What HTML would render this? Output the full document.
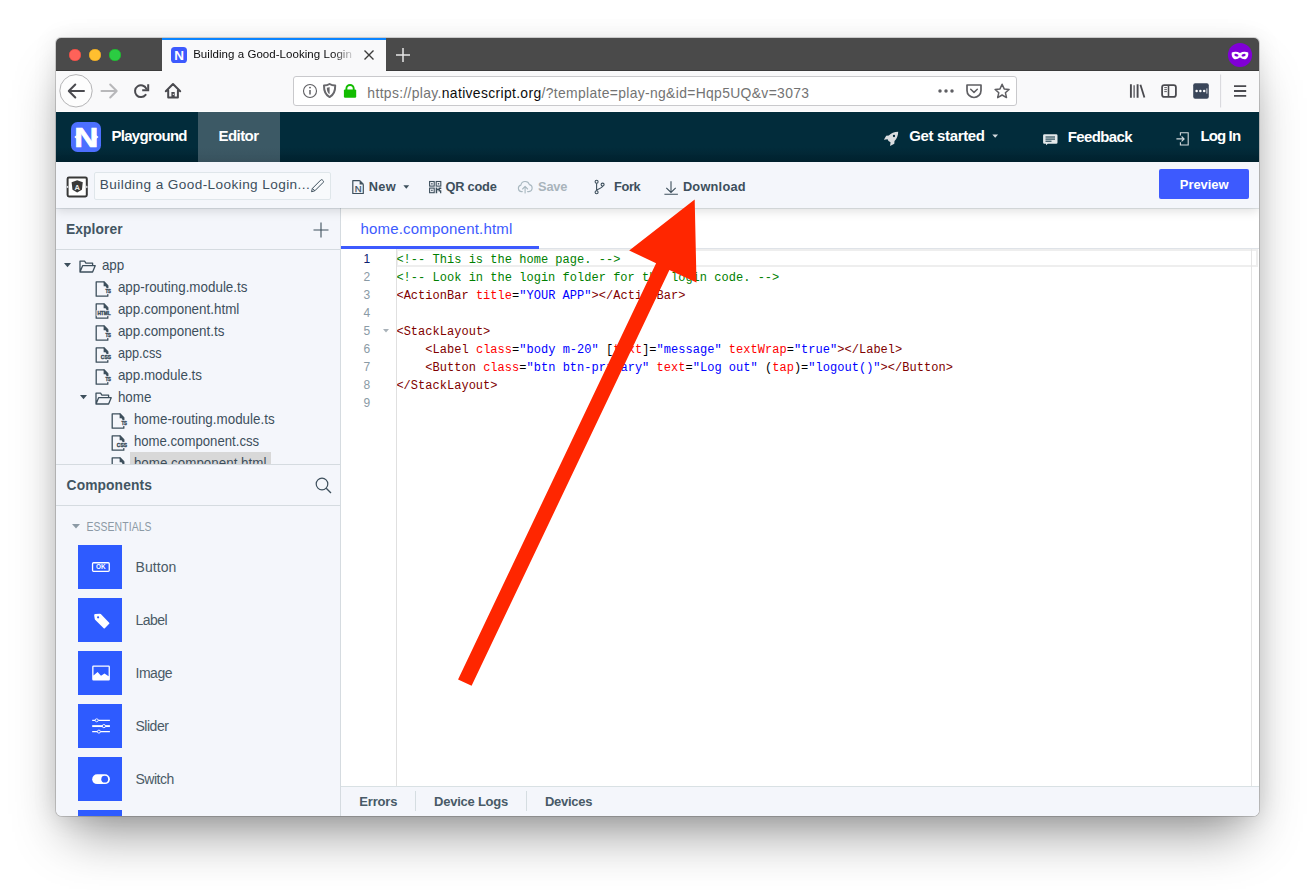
<!DOCTYPE html>
<html lang="en">
<head>
<meta charset="utf-8">
<title>Building a Good-Looking Login</title>
<style>
*{box-sizing:border-box;margin:0;padding:0}
html,body{width:1315px;height:890px;overflow:hidden;background:#fff}
body{font-family:"Liberation Sans",sans-serif;position:relative;color:#3d4f5c}
.abs{position:absolute}
#win{position:absolute;left:56px;top:38px;width:1203px;height:778px;border-radius:5px 5px 6px 6px;background:#f4f6fb;
 box-shadow:0 0 0 1px rgba(0,0,0,.16),0 29px 50px -13px rgba(0,0,0,.42),0 2px 24px rgba(0,0,0,.10);overflow:hidden}
#win > *{position:absolute}
/* ---------- browser chrome ---------- */
#tabbar{left:0;top:0;width:1203px;height:33px;background:#4a4a4a;box-shadow:inset 0 -1px 0 #3b3b3b}
#tab{position:absolute;left:106px;top:0;width:224px;height:33px;background:#f9f9fa;border-top:2px solid #0a84ff}
#tab .t{position:absolute;left:31px;top:7px;font-size:11.5px;color:#0c0c0d;white-space:nowrap;width:166px;overflow:hidden;letter-spacing:.05px;-webkit-mask-image:linear-gradient(to right,#000 0,#000 140px,transparent 163px);mask-image:linear-gradient(to right,#000 0,#000 140px,transparent 163px)}
.dot{position:absolute;top:11px;width:12px;height:12px;border-radius:50%}
#navbar{left:0;top:33px;width:1203px;height:41px;background:#f9f9fa;border-bottom:1px solid #fdfdfd}
#url{position:absolute;left:237px;top:5px;width:724px;height:30px;border:1px solid #c9c9cc;border-radius:3px;background:#fff}
#url .u{position:absolute;left:73px;top:6px;font-size:13.9px;color:#737373;white-space:nowrap;letter-spacing:.1px}
#url .u b{font-weight:normal;color:#0c0c0d}
/* ---------- app header ---------- */
#hdr{left:0;top:74px;width:1203px;height:50px;background:linear-gradient(#022c3b 0,#022c3b 70%,#01222f 100%)}
#hdr .h{position:absolute;top:16px;font-size:15px;font-weight:bold;color:#fff;white-space:nowrap;letter-spacing:-.7px}
#edtab{position:absolute;left:142px;top:0;width:82px;height:50px;background:linear-gradient(#3c5965 0,#3c5965 70%,#39535f 100%)}
/* ---------- toolbar ---------- */
#tool{left:0;top:124px;width:1203px;height:46px;background:#f4f6fb;box-shadow:0 1px 0 rgba(0,40,60,.10),0 3px 10px rgba(0,0,0,.13);z-index:3}
#tool .b{position:absolute;top:16px;font-size:12.8px;font-weight:bold;color:#3d4f5c;white-space:nowrap;letter-spacing:-.75px}
#proj{position:absolute;left:38px;top:10px;width:237px;height:28px;border:1px solid #dfe6ea;background:#f8fafc;border-radius:2px}
#proj span{position:absolute;left:5px;top:4px;font-size:13.6px;color:#3d4f5c;white-space:nowrap;letter-spacing:-.95px}
#t-prev{display:inline-block;line-height:16px}
#prev{position:absolute;left:1103px;top:7px;width:90px;height:30px;background:#3d5afe;border-radius:2px;color:#fff;font-weight:bold;font-size:13px;text-align:center;line-height:30px;letter-spacing:-.7px}
/* ---------- left panel ---------- */
#left{left:0;top:170px;width:285px;height:608px;background:#f4f6fb;border-right:1px solid #d5dbe0}
.ph{position:absolute;left:0;width:284px;height:42px;border-bottom:1px solid #d5dbe0}
.ph span{position:absolute;left:10px;top:11px;font-size:13.8px;font-weight:bold;color:#425562;letter-spacing:-.8px}
.tr{position:absolute;font-size:14.3px;color:#3d4f5c;white-space:nowrap;height:22px;line-height:22px;letter-spacing:-.1px}
.cmp{position:absolute;left:22px;width:44px;height:44px;background:#2e5bff}
.cl{position:absolute;left:80px;font-size:14px;color:#4a5a66;letter-spacing:-.7px}
/* ---------- editor ---------- */
#ed{left:285px;top:170px;width:918px;height:608px;background:#fff}
#ftabs{position:absolute;left:0;top:0;width:918px;height:41px;background:#fff;border-bottom:1px solid #dfe3e8}
#ftabs .f{position:absolute;left:20px;top:11px;font-size:15px;color:#3d5afe;white-space:nowrap;letter-spacing:-.1px}
#ftabs .ul{position:absolute;left:0;top:38px;width:198px;height:3px;background:#3d5afe}
#code{position:absolute;left:0;top:41px;width:918px;height:537px;background:#fff;font-family:"Liberation Mono",monospace;font-size:12px;line-height:18px}
#gut{position:absolute;z-index:2;left:0;top:0;width:56px;height:537px;border-right:1px solid #e0e0e0}
.ln{position:absolute;margin-top:1px;left:22.500px;width:12px;color:#8a9aa5;font-size:12px;font-family:"Liberation Sans",sans-serif}
.cl1{position:absolute;left:55.400px;margin-top:2px;white-space:pre;color:#000;letter-spacing:.024px}
.cm{color:#008000}.tg{color:#800000}.at{color:#ff0000}.st{color:#0000ff}
#bot{position:absolute;left:0;top:578px;width:918px;height:30px;background:#f4f6fb;border-top:1px solid #d9e1e4}
#bot span{position:absolute;top:7px;font-size:13px;font-weight:bold;color:#485a67;letter-spacing:-.7px}

#treeclip{position:absolute;left:0;top:42px;width:284px;height:214px;overflow:hidden}
#tree svg{overflow:visible}
#tree{position:absolute;left:0;top:-42px;width:284px;height:300px}
.ess{font-size:12px;color:#8c9aa5;font-family:"Liberation Sans",sans-serif;letter-spacing:.2px;white-space:nowrap}
#curline{position:absolute;left:55px;top:0;width:862px;height:18px;border:2px solid #eee}
#ruler{position:absolute;left:910px;top:0;width:1px;height:537px;background:#e4e4e4}
.dl{color:#800000}
#arrow{position:absolute;left:0;top:0;z-index:20}
/*FIT*/
#t-tab{letter-spacing:0.05px!important;transform:translate(0.14px,1.0px)}
#t-url{letter-spacing:0.341px!important;transform:translate(0.36px,1.5px)}
#t-pg{letter-spacing:-0.72px!important;transform:translate(0.5px,-0.7px)}
#t-ed{letter-spacing:-0.592px!important;transform:translate(-0.38px,-0.9px)}
#t-gs{letter-spacing:-0.34px!important;transform:translate(1.24px,-0.6px)}
#t-fb{letter-spacing:-0.648px!important;transform:translate(-0.14px,-0.38px)}
#t-li{letter-spacing:-0.862px!important;transform:translate(-0.62px,-0.63px)}
#t-proj{letter-spacing:0.406px!important;transform:translate(-0.14px,0.3px)}
#t-new{letter-spacing:0.375px!important;transform:translate(0.64px,0.7px)}
#t-qr{letter-spacing:-0.225px!important;transform:translate(0.5px,0.88px)}
#t-save{letter-spacing:-0.21px!important;transform:translate(0.12px,0.69px)}
#t-fork{letter-spacing:-0.36px!important;transform:translate(1.0px,0.82px)}
#t-dl{letter-spacing:0.227px!important;transform:translate(-0.12px,0.7px)}
#t-prev{letter-spacing:-0.07px!important;transform:translate(0.12px,0.56px)}
#t-exp{letter-spacing:0.1px!important;transform:translate(-0.12px,2.5px)}
#t-cmp{letter-spacing:0.1px!important;transform:translate(0.6px,1.2px)}
#t-ess{letter-spacing:-0.86px!important;transform:translate(-0.22px,2.1px)}
#t-ftab{letter-spacing:0.19px!important;transform:translate(-0.52px,1.26px)}
#t-err{letter-spacing:-0.196px!important;transform:translate(0.32px,-0.0px)}
#t-dlog{letter-spacing:-0.25px!important;transform:translate(0.12px,-0.0px)}
#t-dev{letter-spacing:-0.265px!important;transform:translate(-0.12px,-0.0px)}
#t-tr1{letter-spacing:-0.95px!important;transform:translate(-0.12px,-0.13px)}
#t-tr2{letter-spacing:-0.405px!important;transform:translate(-0.12px,-0.13px)}
#t-tr3{letter-spacing:-0.462px!important;transform:translate(-0.12px,-0.13px)}
#t-tr4{letter-spacing:-0.496px!important;transform:translate(-0.12px,-0.13px)}
#t-tr5{letter-spacing:-0.85px!important;transform:translate(-0.12px,-0.13px)}
#t-tr6{letter-spacing:-0.55px!important;transform:translate(-0.12px,-0.13px)}
#t-tr7{letter-spacing:-0.75px!important;transform:translate(-0.12px,-0.22px)}
#t-tr8{letter-spacing:-0.414px!important;transform:translate(-0.12px,-0.22px)}
#t-tr9{letter-spacing:-0.6px!important;transform:translate(-0.12px,-0.22px)}
#t-cl1{letter-spacing:0.056px!important;transform:translate(-0.38px,0.1px)}
#t-cl2{letter-spacing:-0.52px!important;transform:translate(-0.56px,0.1px)}
#t-cl3{letter-spacing:-0.475px!important;transform:translate(-0.5px,0.1px)}
#t-cl4{letter-spacing:-0.448px!important;transform:translate(-0.62px,0.1px)}
#t-cl5{letter-spacing:-0.448px!important;transform:translate(-0.62px,0.1px)}
#t-tr10{letter-spacing:-0.47px!important;transform:translate(-0.12px,-0.22px)}
/*ENDFIT*/
#t-tr1{letter-spacing:0!important;transform:translate(-0.12px,-0.13px) scaleX(.937);transform-origin:0 0}
#t-tr2{letter-spacing:0!important;transform:translate(-0.12px,-0.13px) scaleX(.937);transform-origin:0 0}
#t-tr3{letter-spacing:0!important;transform:translate(-0.12px,-0.13px) scaleX(.937);transform-origin:0 0}
#t-tr4{letter-spacing:0!important;transform:translate(-0.12px,-0.13px) scaleX(.937);transform-origin:0 0}
#t-tr5{letter-spacing:0!important;transform:translate(-0.12px,-0.13px) scaleX(.888);transform-origin:0 0}
#t-tr6{letter-spacing:0!important;transform:translate(-0.12px,-0.13px) scaleX(.937);transform-origin:0 0}
#t-tr7{letter-spacing:0!important;transform:translate(-0.12px,-0.22px) scaleX(.937);transform-origin:0 0}
#t-tr8{letter-spacing:0!important;transform:translate(-0.12px,-0.22px) scaleX(.937);transform-origin:0 0}
#t-tr9{letter-spacing:0!important;transform:translate(-0.12px,-0.22px) scaleX(.922);transform-origin:0 0}
#t-tr10{letter-spacing:0!important;transform:translate(-0.12px,-0.22px) scaleX(.937);transform-origin:0 0}
#t-ess{letter-spacing:.1px!important;transform:translate(0.48px,2.1px) scaleX(.868);transform-origin:0 0}

</style>
</head>
<body>
<svg width="0" height="0" style="position:absolute">
  <defs>
    <g id="i-folder"><path d="M1 12V1.2h4.6l1.3 1.9h6.7v2.6M1 12l2.6-6.3h12.6L13.6 12z" fill="none" stroke="#3d4f5c" stroke-width="1.3" stroke-linejoin="round"/></g>
    <g id="i-file"><path d="M9 .8H1.2v14.4h11.6V11M12.8 8V4.6L9 .8z" fill="none" stroke="#3d4f5c" stroke-width="1.3" stroke-linejoin="round"/><path d="M8.6 .8v4.4h4.2z" fill="#3d4f5c"/></g>
    <g id="c-tag"><path d="M16.200 17.400a1.200 1.200 0 0 1 1.100-1.300l4.400-.400a1.400 1.400 0 0 1 1.100.400l8.400 8.600a.800.800 0 0 1 0 1.100l-4.400 4.400a.800.800 0 0 1-1.100 0l-8.600-8.500a1.400 1.400 0 0 1-.400-1z" fill="#fff"/><circle cx="20.100" cy="19.300" r="1.100" fill="#2e5bff"/></g>
    <g id="c-img"><path d="M15.400 14.500h15.300a1.200 1.200 0 0 1 1.200 1.200v12.600a1.200 1.200 0 0 1-1.200 1.200H15.400a1.200 1.200 0 0 1-1.200-1.200V15.700a1.200 1.200 0 0 1 1.200-1.200zm.100 1.300v8.600l4.100-3.300 3.400 3.600 3.500-2.100 4.100 2.700v-9.500z" fill="#fff" fill-rule="evenodd"/></g>
    <g id="c-sld"><path d="M14.200 16.300h17.700M14.200 27.600h17.700" stroke="#fff" stroke-width="1.300"/><path d="M14.200 22.100h17.700" stroke="#fff" stroke-width="1.900"/><circle cx="18.700" cy="16.300" r="1.500" fill="#2e5bff" stroke="#fff" stroke-width=".9"/><circle cx="25.900" cy="22.100" r="1.600" fill="#2e5bff" stroke="#fff" stroke-width=".9"/><circle cx="20.900" cy="27.600" r="1.500" fill="#2e5bff" stroke="#fff" stroke-width=".9"/></g>
    <g id="c-sw"><rect x="14.200" y="17.300" width="17.700" height="9.800" rx="4.900" fill="#fff"/><circle cx="26.700" cy="22.200" r="3.400" fill="#2e5bff"/></g>
  </defs>
</svg>
<svg id="chrome-ic" width="1315" height="890" viewBox="0 0 1315 890" style="position:absolute;left:0;top:0;z-index:10;pointer-events:none">
  <!-- tab favicon -->
  <rect x="171" y="47" width="16" height="16" rx="3.6" fill="#3d5afe"/>
  <text x="179" y="60" text-anchor="middle" font-family="Liberation Sans,sans-serif" font-weight="bold" font-size="13.500" fill="#fff">N</text>
  <!-- close + plus -->
  <path d="M364.500 50.500l9 9m0-9l-9 9" stroke="#3c3c3c" stroke-width="1.400" fill="none"/>
  <path d="M396 55h14m-7-7v14" stroke="#e6e6e6" stroke-width="1.500" fill="none"/>
  <!-- private mask -->
  <circle cx="1240" cy="55" r="12.100" fill="#8000d7"/>
  <path d="M1231.800 52.600c2.800-1.500 5.600-1.100 8.200.300 2.600-1.400 5.400-1.800 8.200-.300.500 2.600-.300 5.200-2.200 6.300-2.400 1-4.200-.700-6-1.500-1.800.800-3.600 2.500-6 1.500-1.900-1.100-2.700-3.700-2.200-6.300z" fill="#fff"/>
  <ellipse cx="1236.400" cy="55.200" rx="2.100" ry="1.300" fill="#8000d7" transform="rotate(12 1236.400 55.200)"/>
  <ellipse cx="1243.600" cy="55.200" rx="2.100" ry="1.300" fill="#8000d7" transform="rotate(-12 1243.600 55.200)"/>
  <!-- back -->
  <circle cx="76" cy="90.800" r="16.200" fill="#fdfdfd" stroke="#b4b4b6" stroke-width="1"/>
  <path d="M84 91H69.200M75.300 84.500L68.800 91l6.500 6.500" stroke="#4a4a4f" stroke-width="2" fill="none" stroke-linecap="round" stroke-linejoin="round"/>
  <path d="M101.500 91h14.800M110.200 84.500l6.500 6.500-6.500 6.500" stroke="#b8b8ba" stroke-width="2" fill="none" stroke-linecap="round" stroke-linejoin="round"/>
  <!-- reload -->
  <path d="M146.300 88.700A5.900 5.900 0 1 0 145.600 94.800" stroke="#4a4a4f" stroke-width="2" fill="none" stroke-linecap="round"/>
  <path d="M148.200 84.300v6h-6" stroke="#4a4a4f" stroke-width="2" fill="none" stroke-linejoin="miter"/>
  <!-- home -->
  <path d="M165.800 91.200L173 84l7.200 7.200M168.200 90.500V97.400h9.700V90.500" stroke="#4a4a4f" stroke-width="2" fill="none" stroke-linecap="round" stroke-linejoin="round"/>
  <path d="M171.400 92h3.300v5.500h-3.300z" fill="#4a4a4f"/>
  <rect x="172.800" y="93.800" width="1" height="1.200" fill="#f9f9fa"/>
  <!-- info -->
  <circle cx="310" cy="91" r="6.500" fill="none" stroke="#5f5f63" stroke-width="1.100"/>
  <path d="M310 90v4.600" stroke="#5f5f63" stroke-width="1.500"/><circle cx="310" cy="87.600" r=".95" fill="#5f5f63"/>
  <!-- shield -->
  <path d="M329.600 84c-1.800 1.100-3.600 1.500-5.600 1.600-.100 5.500 1.100 9.300 5.600 11.500 4.500-2.200 5.700-6 5.600-11.500-2-.100-3.800-.500-5.600-1.600z" fill="none" stroke="#68686c" stroke-width="2" stroke-linejoin="round"/>
  <path d="M329.600 86.900c-.900.500-1.800.700-2.800.800.100 3.100.900 5.300 2.800 6.600z" fill="#68686c"/>
  <!-- lock -->
  <path d="M346.400 90.500v-1.900a3.650 3.650 0 0 1 7.300 0v1.900" fill="none" stroke="#12bc00" stroke-width="1.900"/>
  <rect x="343.900" y="89.400" width="12.300" height="8.300" rx="1.200" fill="#12bc00"/>
  <!-- page actions -->
  <circle cx="940" cy="91" r="1.750" fill="#5f5f63"/><circle cx="946" cy="91" r="1.750" fill="#5f5f63"/><circle cx="952" cy="91" r="1.750" fill="#5f5f63"/>
  <path d="M967 85h14v5.500a7 7 0 0 1-14 0z" fill="none" stroke="#5f5f63" stroke-width="1.700" stroke-linejoin="round"/>
  <path d="M970.700 89.300l3.300 3.100 3.300-3.100" fill="none" stroke="#5f5f63" stroke-width="1.500" stroke-linecap="round" stroke-linejoin="round"/>
  <path d="M1002.100 84.300l2.100 4.600 4.900.500-3.700 3.300 1.100 4.900-4.400-2.600-4.400 2.600 1.100-4.900-3.700-3.300 4.900-.500z" fill="none" stroke="#5f5f63" stroke-width="1.500" stroke-linejoin="round"/>
  <!-- right toolbar -->
  <path d="M1130.900 84.300v13.500M1137.600 84.300v13.500" stroke="#4a4a4f" stroke-width="1.900"/>
  <path d="M1134.100 85.300v12.500" stroke="#4a4a4f" stroke-width="1.200"/>
  <path d="M1140.400 84.800l4 12.800" stroke="#4a4a4f" stroke-width="1.800"/>
  <rect x="1162.100" y="85.100" width="13.800" height="11.800" rx="2.200" fill="none" stroke="#4a4a4f" stroke-width="1.800"/>
  <path d="M1168.500 85v12" stroke="#4a4a4f" stroke-width="1.600"/>
  <path d="M1164.300 87.600h2.600M1164.300 89.600h2.600M1164.300 91.600h2.600" stroke="#4a4a4f" stroke-width=".9"/>
  <rect x="1193.200" y="83.200" width="15.600" height="15.600" rx="2" fill="#3a4659"/>
  <circle cx="1196.600" cy="91" r="1.250" fill="#fff"/><circle cx="1200.400" cy="91" r="1.250" fill="#fff"/><circle cx="1204.200" cy="91" r="1.250" fill="#fff"/>
  <path d="M1206.900 88.400v5.200" stroke="#e6e8ec" stroke-width=".9"/>
  <path d="M1220.600 74.500v33" stroke="#d7d7db" stroke-width="1"/>
  <path d="M1234 86.100h12.200M1234 91h12.200M1234 95.900h12.200" stroke="#4a4a4f" stroke-width="1.900"/>
  <!-- app header: N logo -->
  <rect x="71" y="122" width="30" height="30" rx="6.500" fill="#4c6fff"/>
  <text transform="translate(86.400 147) scale(1.2 1)" x="0" y="0" text-anchor="middle" font-family="Liberation Sans,sans-serif" font-weight="bold" font-size="27.800" fill="#fff" stroke="#fff" stroke-width=".7">N</text>
  <path d="M74.300 137l2.400-2v4zM98.500 137l-2.400-2v4z" fill="#fff"/>
  <!-- rocket -->
  <path d="M898.200 131.800C894.300 131.900 891 133.200 888.800 135.500L886.200 135.700L883.900 139.700L887.600 139.300L888.500 141L890.500 142.300L890.100 146.100L894.300 143.700L894.500 141C896.900 138.900 898.100 135.600 898.200 131.800Z" fill="#dadde0"/><circle cx="894" cy="136" r="1.150" fill="#022b3a"/>
  <!-- get started caret -->
  <path d="M992.300 134.500h5.800l-2.900 3.200z" fill="#d4dade"/>
  <!-- feedback -->
  <path d="M1044.400 134.300h11.800a1.300 1.300 0 0 1 1.300 1.300v6.800a1.300 1.300 0 0 1-1.300 1.300h-8.400l-1.800 1.600v-1.600h-1.600a1.300 1.300 0 0 1-1.300-1.300v-6.800a1.300 1.300 0 0 1 1.300-1.300z" fill="#e3e8ea"/>
  <path d="M1045.500 137h9.500M1045.500 139.100h9.500M1045.500 141.200h6" stroke="#022b3a" stroke-width="1"/>
  <!-- login -->
  <path d="M1180.400 135.500v-2.700h7.800v12.200h-7.800v-2.700" fill="none" stroke="#d4dade" stroke-width="1.100"/>
  <path d="M1176.400 138.900h7.600M1181.600 136.500l2.500 2.400-2.500 2.400" fill="none" stroke="#d4dade" stroke-width="1.100"/>
  <!-- angular icon -->
  <rect x="67.600" y="177.400" width="19.200" height="19" rx="1.400" fill="#fff" stroke="#383838" stroke-width="2"/>
  <path d="M77.200 180.200l5.600 2-0.900 7.500-4.700 2.700-4.700-2.700-.900-7.500z" fill="#3a3a3a"/>
  <text x="77.200" y="189.800" text-anchor="middle" font-family="Liberation Sans,sans-serif" font-weight="bold" font-size="7.500" fill="#ececec">A</text>
  <path d="M66.400 186.900l1.800-1.300v2.600zM88 186.900l-1.800-1.300v2.600z" fill="#f4f6fb"/>
  <!-- pencil -->
  <path transform="translate(-2.7 .2)" d="M314.200 191.500l.9-3.300 8.300-8.300a1.300 1.300 0 0 1 1.800 0l.6.600a1.300 1.300 0 0 1 0 1.800l-8.300 8.300zM315.300 188.300l2.300 2.300" fill="none" stroke="#3d4f5c" stroke-width="1"/>
  <!-- new -->
  <path d="M359.800 180.700h-7v12.800h10.500V184.200M359.800 180.700l3.500 3.500" fill="none" stroke="#3d4f5c" stroke-width="1.200" stroke-linejoin="round"/>
  <path d="M359.600 180.700v3.700h3.700z" fill="#3d4f5c"/>
  <text x="358.200" y="192.300" text-anchor="middle" font-family="Liberation Sans,sans-serif" font-size="9.500" fill="#3d4f5c" stroke="#3d4f5c" stroke-width=".25">N</text>
  <path d="M403.400 185.300h5.800l-2.900 3.400z" fill="#3d4f5c"/>
  <!-- QR -->
  <g fill="none" stroke="#3d4f5c" stroke-width="1.100"><rect x="429.600" y="181.500" width="4.600" height="4.600"/><rect x="436.200" y="181.500" width="4.600" height="4.600"/><rect x="429.600" y="188.100" width="4.600" height="4.600"/></g>
  <g fill="#3d4f5c"><rect x="431.200" y="183.100" width="1.400" height="1.400"/><rect x="437.800" y="183.100" width="1.400" height="1.400"/><rect x="431.200" y="189.700" width="1.400" height="1.400"/><path d="M435.700 187.600h1.500v1.200h1.400v-1.200h2.700v1.300h-1.400v1.300h1.400v3h-1.300v-1.700h-1.400v-1.300h-1.400v3h-1.500z"/></g>
  <!-- save cloud -->
  <path d="M522.300 191.600h-.8a3.300 3.300 0 0 1-.6-6.500 4.400 4.400 0 0 1 8.500-.5 3.550 3.550 0 0 1-.5 7h-1.300" fill="none" stroke="#a9b8c0" stroke-width="1.100" stroke-linecap="round"/>
  <path d="M525.100 193v-6.400M522.600 189l2.500-2.600 2.500 2.600" fill="none" stroke="#a9b8c0" stroke-width="1.100" stroke-linecap="round" stroke-linejoin="round"/>
  <!-- fork -->
  <g fill="none" stroke="#3d4f5c" stroke-width="1.100"><circle cx="596.600" cy="181.800" r="1.500"/><circle cx="596.600" cy="192.200" r="1.500"/><circle cx="602.600" cy="184.600" r="1.500"/><path d="M596.600 183.300v7.400M602.600 186.100c0 2.600-5.400 2-6 4.600"/></g>
  <!-- download -->
  <path d="M671 181.300v11M666.300 187.800l4.700 4.700 4.700-4.700M664.400 194.300h13.500" fill="none" stroke="#3d4f5c" stroke-width="1.100"/>
</svg>
<svg id="arrow" width="1315" height="890" viewBox="0 0 1315 890"><path d="M458.050 679.500L471.600 685.800L669.400 269.900L696.500 282.400L694.700 199.400L629.200 250.500L656.100 263.200Z" fill="#ff2600"/></svg>
<div id="win">
  <div id="tabbar">
    <div class="dot" style="left:13px;background:#ff6259;box-shadow:inset 0 0 0 .5px #e2463f"></div>
    <div class="dot" style="left:33px;background:#ffbf2f;box-shadow:inset 0 0 0 .5px #dfa023"></div>
    <div class="dot" style="left:53px;background:#2bcc42;box-shadow:inset 0 0 0 .5px #1dad2b"></div>
    <div id="tab"><span class="t" id="t-tab">Building a Good-Looking Login</span></div>
  </div>
  <div id="navbar">
    <div id="url"><span class="u" id="t-url">https://play.<b>nativescript.org</b>/?template=play-ng&amp;id=Hqp5UQ&amp;v=3073</span></div>
  </div>
  <div id="hdr">
    <div id="edtab"></div>
    <span class="h" id="t-pg" style="left:55px">Playground</span>
    <span class="h" id="t-ed" style="left:163px">Editor</span>
    <span class="h" id="t-gs" style="left:852px">Get started</span>
    <span class="h" id="t-fb" style="left:1012px">Feedback</span>
    <span class="h" id="t-li" style="left:1145px">Log In</span>
  </div>
  <div id="tool">
    <div id="proj"><span id="t-proj">Building a Good-Looking Login...</span></div>
    <span class="b" id="t-new" style="left:312px">New</span>
    <span class="b" id="t-qr" style="left:389px">QR code</span>
    <span class="b" id="t-save" style="left:482px;color:#a9b4bb">Save</span>
    <span class="b" id="t-fork" style="left:557px">Fork</span>
    <span class="b" id="t-dl" style="left:627px">Download</span>
    <div id="prev"><span id="t-prev">Preview</span></div>
  </div>
  <div id="left">
    <div class="ph" style="top:0"><span id="t-exp">Explorer</span>
      <svg class="abs" style="left:257px;top:14px" width="16" height="16" viewBox="0 0 16 16"><path d="M8 .5v15M.5 8h15" stroke="#3d4f5c" stroke-width="1.1" fill="none"/></svg>
    </div>
    <div id="treeclip"><div id="tree">
    <svg class="abs" style="left:8px;top:55px" width="7" height="5" viewBox="0 0 7 5"><path d="M0 0h7L3.5 4.2z" fill="#3d4f5c"/></svg>
    <svg class="abs" style="left:23px;top:52px" width="17" height="13" viewBox="0 0 17 13"><use href="#i-folder"/></svg>
    <div class="tr" id="t-tr1" style="left:46px;top:46px">app</div>
    <svg class="abs" style="left:39px;top:73px" width="17" height="16" viewBox="0 0 17 16"><use href="#i-file"/><rect x="9.5" y="7.1" width="7.2" height="6" fill="#f4f6fb"/><text x="10.4" y="12.3" textLength="5.6" lengthAdjust="spacingAndGlyphs" font-family="Liberation Sans,sans-serif" font-weight="bold" font-size="6" fill="#3d4f5c" stroke="#3d4f5c" stroke-width=".45">TS</text></svg>
    <div class="tr" id="t-tr2" style="left:62px;top:68px">app-routing.module.ts</div>
    <svg class="abs" style="left:39px;top:95px" width="17" height="16" viewBox="0 0 17 16"><use href="#i-file"/><rect x="1.5" y="7.1" width="14.9" height="6" fill="#f4f6fb"/><text x="2.4" y="12.3" textLength="13.3" lengthAdjust="spacingAndGlyphs" font-family="Liberation Sans,sans-serif" font-weight="bold" font-size="6" fill="#3d4f5c" stroke="#3d4f5c" stroke-width=".45">HTML</text></svg>
    <div class="tr" id="t-tr3" style="left:62px;top:90px">app.component.html</div>
    <svg class="abs" style="left:39px;top:117px" width="17" height="16" viewBox="0 0 17 16"><use href="#i-file"/><rect x="9.5" y="7.1" width="7.2" height="6" fill="#f4f6fb"/><text x="10.4" y="12.3" textLength="5.6" lengthAdjust="spacingAndGlyphs" font-family="Liberation Sans,sans-serif" font-weight="bold" font-size="6" fill="#3d4f5c" stroke="#3d4f5c" stroke-width=".45">TS</text></svg>
    <div class="tr" id="t-tr4" style="left:62px;top:112px">app.component.ts</div>
    <svg class="abs" style="left:39px;top:139px" width="17" height="16" viewBox="0 0 17 16"><use href="#i-file"/><rect x="4.9" y="7.1" width="11.8" height="6" fill="#f4f6fb"/><text x="5.8" y="12.3" textLength="10.2" lengthAdjust="spacingAndGlyphs" font-family="Liberation Sans,sans-serif" font-weight="bold" font-size="6" fill="#3d4f5c" stroke="#3d4f5c" stroke-width=".45">CSS</text></svg>
    <div class="tr" id="t-tr5" style="left:62px;top:134px">app.css</div>
    <svg class="abs" style="left:39px;top:161px" width="17" height="16" viewBox="0 0 17 16"><use href="#i-file"/><rect x="9.5" y="7.1" width="7.2" height="6" fill="#f4f6fb"/><text x="10.4" y="12.3" textLength="5.6" lengthAdjust="spacingAndGlyphs" font-family="Liberation Sans,sans-serif" font-weight="bold" font-size="6" fill="#3d4f5c" stroke="#3d4f5c" stroke-width=".45">TS</text></svg>
    <div class="tr" id="t-tr6" style="left:62px;top:156px">app.module.ts</div>
    <svg class="abs" style="left:24px;top:187px" width="7" height="5" viewBox="0 0 7 5"><path d="M0 0h7L3.5 4.2z" fill="#3d4f5c"/></svg>
    <svg class="abs" style="left:39px;top:184px" width="17" height="13" viewBox="0 0 17 13"><use href="#i-folder"/></svg>
    <div class="tr" id="t-tr7" style="left:62px;top:178px">home</div>
    <svg class="abs" style="left:55px;top:205px" width="17" height="16" viewBox="0 0 17 16"><use href="#i-file"/><rect x="9.5" y="7.1" width="7.2" height="6" fill="#f4f6fb"/><text x="10.4" y="12.3" textLength="5.6" lengthAdjust="spacingAndGlyphs" font-family="Liberation Sans,sans-serif" font-weight="bold" font-size="6" fill="#3d4f5c" stroke="#3d4f5c" stroke-width=".45">TS</text></svg>
    <div class="tr" id="t-tr8" style="left:78px;top:200px">home-routing.module.ts</div>
    <svg class="abs" style="left:55px;top:227px" width="17" height="16" viewBox="0 0 17 16"><use href="#i-file"/><rect x="4.9" y="7.1" width="11.8" height="6" fill="#f4f6fb"/><text x="5.8" y="12.3" textLength="10.2" lengthAdjust="spacingAndGlyphs" font-family="Liberation Sans,sans-serif" font-weight="bold" font-size="6" fill="#3d4f5c" stroke="#3d4f5c" stroke-width=".45">CSS</text></svg>
    <div class="tr" id="t-tr9" style="left:78px;top:222px">home.component.css</div>
    <svg class="abs" style="left:55px;top:249px" width="17" height="16" viewBox="0 0 17 16"><use href="#i-file"/><rect x="1.5" y="7.1" width="14.9" height="6" fill="#f4f6fb"/><text x="2.4" y="12.3" textLength="13.3" lengthAdjust="spacingAndGlyphs" font-family="Liberation Sans,sans-serif" font-weight="bold" font-size="6" fill="#3d4f5c" stroke="#3d4f5c" stroke-width=".45">HTML</text></svg>
    <div class="abs" style="left:74px;top:244px;width:141px;height:22px;background:#d8d8d8"></div>
    <div class="tr" id="t-tr10" style="left:78px;top:244px">home.component.html</div>
    </div></div>
    <div class="ph" style="top:256px;border-top:1px solid #d5dbe0;height:42px"><span id="t-cmp" style="top:12px">Components</span>
      <svg class="abs" style="left:259px;top:12px" width="17" height="17" viewBox="0 0 17 17"><circle cx="7" cy="7" r="5.8" fill="none" stroke="#3d4f5c" stroke-width="1.2"/><path d="M11.2 11.2L16 16" stroke="#3d4f5c" stroke-width="1.3"/></svg>
    </div>
    <svg class="abs" style="left:16px;top:316px" width="8" height="5" viewBox="0 0 8 5"><path d="M0 0h8L4 4.6z" fill="#8c9aa5"/></svg>
    <div class="abs ess" id="t-ess" style="left:30px;top:310px">ESSENTIALS</div>
    <div class="cmp" style="top:337px"><svg width="44" height="44" viewBox="0 0 44 44"><rect x="14.55" y="17.75" width="16.7" height="8.6" rx="1" fill="none" stroke="#fff" stroke-width="1.3"/><text x="22.9" y="24.4" text-anchor="middle" font-family="Liberation Sans,sans-serif" font-weight="bold" font-size="6.4" fill="#fff">OK</text></svg></div>
    <div class="cl" id="t-cl1" style="top:351px">Button</div>
    <div class="cmp" style="top:390px"><svg width="44" height="44" viewBox="0 0 44 44"><use href="#c-tag"/></svg></div>
    <div class="cl" id="t-cl2" style="top:404px">Label</div>
    <div class="cmp" style="top:443px"><svg width="44" height="44" viewBox="0 0 44 44"><use href="#c-img"/></svg></div>
    <div class="cl" id="t-cl3" style="top:457px">Image</div>
    <div class="cmp" style="top:496px"><svg width="44" height="44" viewBox="0 0 44 44"><use href="#c-sld"/></svg></div>
    <div class="cl" id="t-cl4" style="top:510px">Slider</div>
    <div class="cmp" style="top:549px"><svg width="44" height="44" viewBox="0 0 44 44"><use href="#c-sw"/></svg></div>
    <div class="cl" id="t-cl5" style="top:563px">Switch</div>
    <div class="cmp" style="top:602px"></div>
  </div>
  <div id="ed">
    <div id="ftabs"><span class="f" id="t-ftab">home.component.html</span><div class="ul"></div></div>
    <div id="code"><div id="gut"></div>
      <div id="curline"></div><div id="ruler"></div>
      <div class="ln" style="top:0px;color:#0b216f">1</div>
      <div class="cl1" style="top:0px"><span class="cm">&lt;!-- This is the home page. --&gt;</span></div>
      <div class="ln" style="top:18px">2</div>
      <div class="cl1" style="top:18px"><span class="cm">&lt;!-- Look in the login folder for the login code. --&gt;</span></div>
      <div class="ln" style="top:36px">3</div>
      <div class="cl1" style="top:36px"><span class="dl">&lt;</span><span class="tg">ActionBar</span> <span class="at">title</span>=<span class="st">"YOUR APP"</span><span class="dl">&gt;&lt;/</span><span class="tg">ActionBar</span><span class="dl">&gt;</span></div>
      <div class="ln" style="top:54px">4</div>
      <div class="ln" style="top:72px">5</div>
      <div class="cl1" style="top:72px"><span class="dl">&lt;</span><span class="tg">StackLayout</span><span class="dl">&gt;</span></div>
      <div class="ln" style="top:90px">6</div>
      <div class="cl1" style="top:90px">    <span class="dl">&lt;</span><span class="tg">Label</span> <span class="at">class</span>=<span class="st">"body m-20"</span> [<span class="at">text</span>]=<span class="st">"message"</span> <span class="at">textWrap</span>=<span class="st">"true"</span><span class="dl">&gt;&lt;/</span><span class="tg">Label</span><span class="dl">&gt;</span></div>
      <div class="ln" style="top:108px">7</div>
      <div class="cl1" style="top:108px">    <span class="dl">&lt;</span><span class="tg">Button</span> <span class="at">class</span>=<span class="st">"btn btn-primary"</span> <span class="at">text</span>=<span class="st">"Log out"</span> (<span class="at">tap</span>)=<span class="st">"logout()"</span><span class="dl">&gt;&lt;/</span><span class="tg">Button</span><span class="dl">&gt;</span></div>
      <div class="ln" style="top:126px">8</div>
      <div class="cl1" style="top:126px"><span class="dl">&lt;/</span><span class="tg">StackLayout</span><span class="dl">&gt;</span></div>
      <div class="ln" style="top:144px">9</div>
      <svg class="abs" style="left:41.5px;top:80px" width="6" height="4" viewBox="0 0 6 4"><path d="M0 0h6L3 3.6z" fill="#a9b2b9"/></svg>
    </div>
    <div id="bot">
      <i style="position:absolute;left:74px;top:4px;width:1px;height:20px;background:#d5dde1"></i><i style="position:absolute;left:185px;top:4px;width:1px;height:20px;background:#d5dde1"></i><span id="t-err" style="left:18px">Errors</span>
      <span id="t-dlog" style="left:93px">Device Logs</span>
      <span id="t-dev" style="left:204px">Devices</span>
    </div>
  </div>
</div>
</body>
</html>
